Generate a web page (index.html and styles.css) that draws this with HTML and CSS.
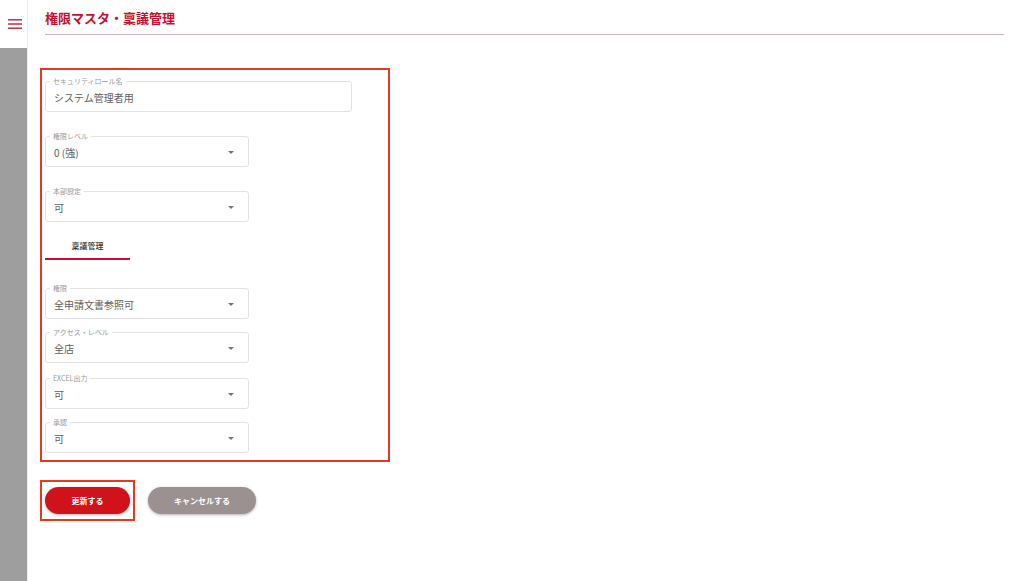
FILE: index.html
```html
<!DOCTYPE html>
<html lang="ja">
<head>
    <meta charset="UTF-8">
    <meta name="viewport" content="width=device-width, initial-scale=1.0">
    <title>権限マスタ・稟議管理</title>
    <link rel="stylesheet" href="styles.css">
</head>
<body>
    <div class="sidebar">
        <div class="sidebar-head">
            <svg class="menu-icon" width="14" height="12" viewBox="0 0 14 12">
                <rect x="0" y="1" width="14" height="1.6" fill="#c43c4e"/>
                <rect x="0" y="5.2" width="14" height="1.6" fill="#c43c4e"/>
                <rect x="0" y="9.4" width="14" height="1.6" fill="#c43c4e"/>
            </svg>
        </div>
        <div class="sidebar-body"></div>
    </div>

    <div class="main">
        <h1 class="page-title">権限マスタ・稟議管理</h1>

        <div class="form-box">
            <div class="field field-wide">
                <span class="field-label">セキュリティロール名</span>
                <span class="field-value">システム管理者用</span>
            </div>

            <div class="field field-select gap-lg">
                <span class="field-label">権限レベル</span>
                <span class="field-value">0 (強)</span>
                <span class="arrow"></span>
            </div>

            <div class="field field-select gap-lg">
                <span class="field-label">本部設定</span>
                <span class="field-value">可</span>
                <span class="arrow"></span>
            </div>

            <div class="tabs">
                <div class="tab tab-active">稟議管理</div>
            </div>

            <div class="field field-select gap-tab">
                <span class="field-label">権限</span>
                <span class="field-value">全申請文書参照可</span>
                <span class="arrow"></span>
            </div>

            <div class="field field-select gap-sm">
                <span class="field-label">アクセス・レベル</span>
                <span class="field-value">全店</span>
                <span class="arrow"></span>
            </div>

            <div class="field field-select gap-md">
                <span class="field-label">EXCEL出力</span>
                <span class="field-value">可</span>
                <span class="arrow"></span>
            </div>

            <div class="field field-select gap-sm">
                <span class="field-label">承認</span>
                <span class="field-value">可</span>
                <span class="arrow"></span>
            </div>
        </div>

        <div class="actions">
            <div class="highlight">
                <button class="btn btn-primary">更新する</button>
            </div>
            <button class="btn btn-cancel">キャンセルする</button>
        </div>
    </div>
</body>
</html>
```

FILE: styles.css
```css
body {
    font-family: "Noto Sans CJK JP", "Noto Sans", sans-serif;
    margin: 0;
    padding: 0;
    background-color: #ffffff;
    display: flex;
    height: 100vh;
    color: #333;
    overflow: hidden;
}
.sidebar {
    width: 27px;
    border-right: 1px solid #ededed;
    display: flex;
    flex-direction: column;
    flex-shrink: 0;
}
.sidebar-head {
    height: 48px;
    display: flex;
    justify-content: center;
    padding-top: 18px;
    box-sizing: border-box;
}
.menu-icon {
    margin-left: 2px;
}
.sidebar-body {
    flex: 1;
    background: #9e9e9e;
}
.main {
    flex: 1;
    padding: 0 20px 0 17px;
}
.page-title {
    margin: 0;
    padding-top: 8px;
    height: 26px;
    font-size: 13px;
    line-height: 20px;
    font-weight: bold;
    color: #c8102e;
    border-bottom: 1px solid #cfb3b8;
}
.form-box {
    margin: 33px 0 0 -5px;
    width: 350px;
    box-sizing: border-box;
    border: 2px solid #e63a1e;
    padding: 11px 0 7px 3px;
}
.field {
    position: relative;
    height: 31px;
    box-sizing: border-box;
    border: 1px solid #e3e3e3;
    border-radius: 3px;
    display: flex;
    align-items: center;
    padding: 0 8px;
}
.field-wide {
    width: 307px;
}
.field-select {
    width: 204px;
}
.field-label {
    position: absolute;
    top: -6px;
    left: 4px;
    padding: 0 3px;
    background: #fff;
    font-size: 7px;
    line-height: 10px;
    color: #999;
}
.field-value {
    font-size: 10px;
    color: #606060;
    padding-top: 1px;
}
.arrow {
    margin-left: auto;
    margin-right: 6px;
    margin-top: 2px;
    width: 0;
    height: 0;
    border-left: 3px solid transparent;
    border-right: 3px solid transparent;
    border-top: 3px solid #777;
}
.gap-lg {
    margin-top: 24px;
}
.gap-md {
    margin-top: 15px;
}
.gap-sm {
    margin-top: 13px;
}
.gap-tab {
    margin-top: 28px;
}
.tabs {
    display: flex;
    margin-top: 13px;
}
.tab {
    width: 85px;
    height: 25px;
    box-sizing: border-box;
    text-align: center;
    font-size: 8px;
    line-height: 21px;
    font-weight: 500;
    color: #333;
}
.tab-active {
    border-bottom: 2px solid #c8102e;
}
.actions {
    display: flex;
    align-items: center;
    margin: 18px 0 0 -5px;
    gap: 13px;
}
.highlight {
    border: 2px solid #e63a1e;
    padding: 5px 3px;
    display: flex;
}
.btn {
    border: none;
    height: 27px;
    border-radius: 14px;
    font-family: inherit;
    font-size: 8px;
    font-weight: bold;
    color: #fff;
    cursor: pointer;
    box-shadow: 0 1px 3px rgba(0, 0, 0, 0.3);
}
.btn-primary {
    width: 85px;
    background: #d0121b;
}
.btn-cancel {
    width: 108px;
    background: #9c9191;
}
```
